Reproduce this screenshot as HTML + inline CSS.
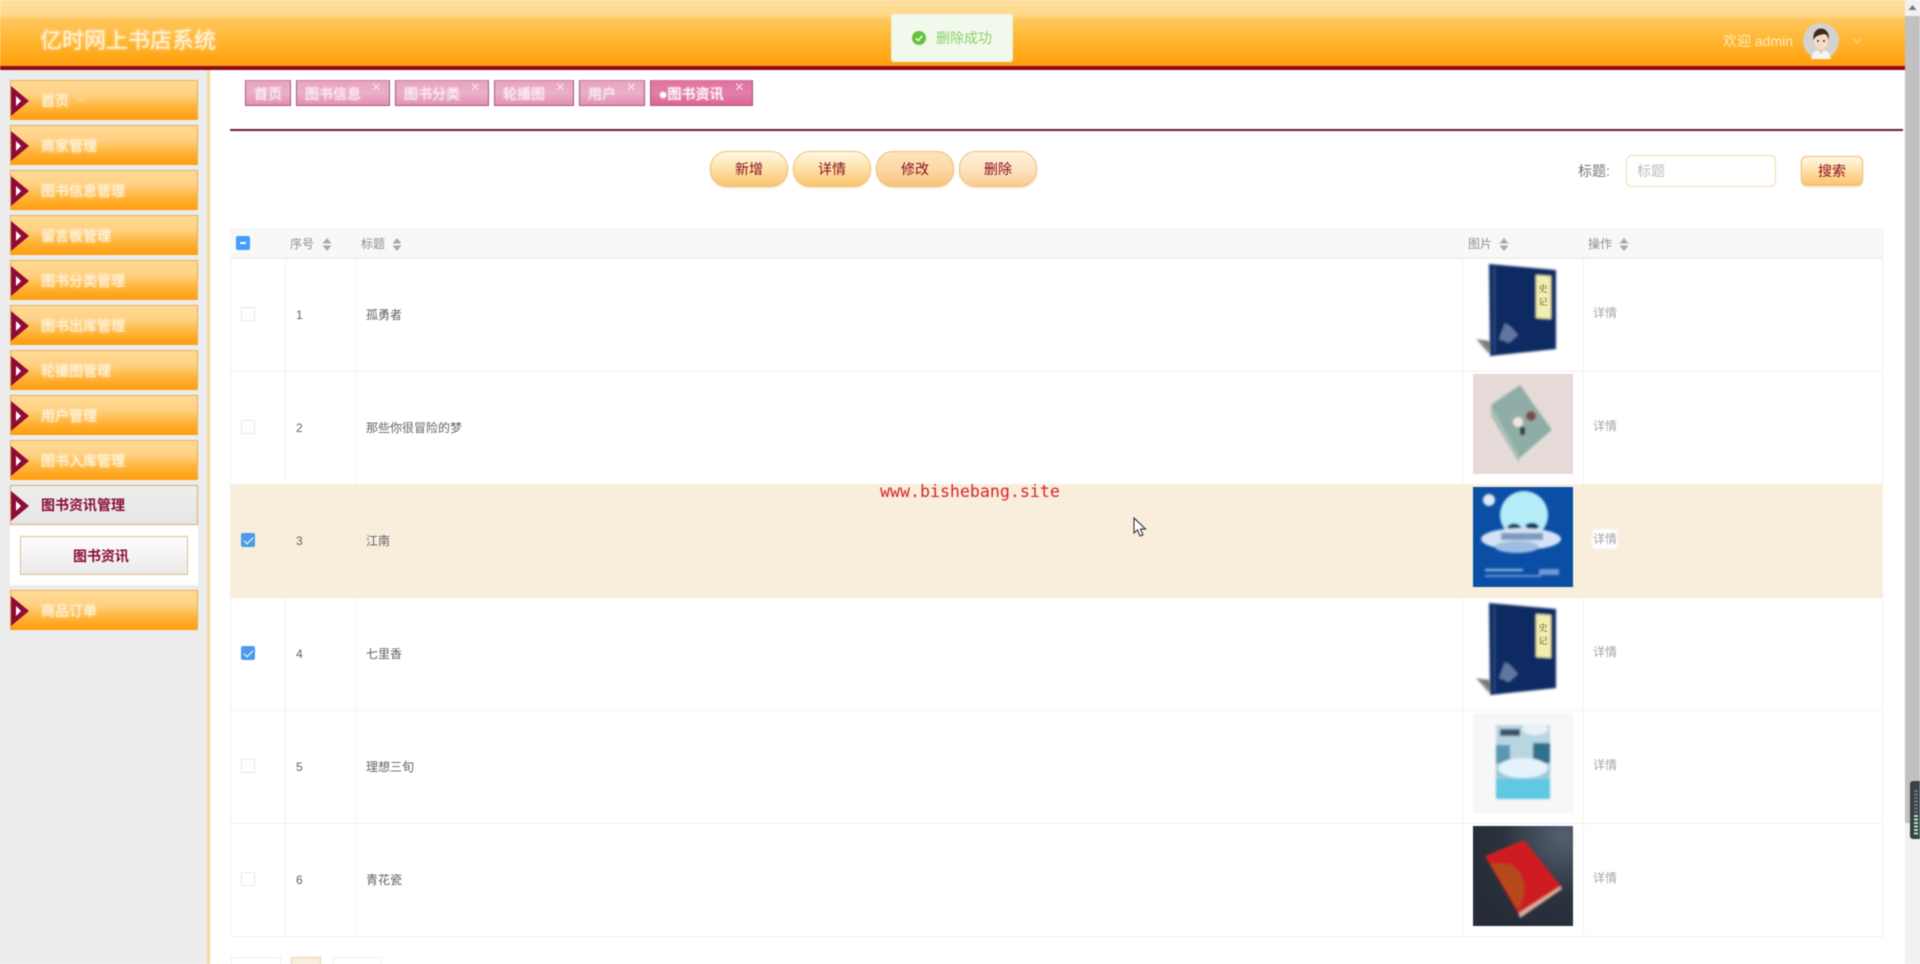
<!DOCTYPE html>
<html lang="zh"><head><meta charset="utf-8"><title>亿时网上书店系统</title>
<style>
*{box-sizing:border-box;margin:0;padding:0}
html,body{width:1920px;height:964px;overflow:hidden;background:#fff;font-family:"Liberation Sans","Noto Sans CJK SC",sans-serif}
#w{position:relative;width:1920px;height:964px;overflow:hidden;filter:blur(.4px)}
.a{position:absolute;white-space:nowrap}
#hd{left:0;top:0;width:1905px;height:70px;border-bottom:4px solid #8f0a1c;background:linear-gradient(#ffdf9e 0,#ffd98c 15px,#ffc65c 20px,#ffb52e 42px,#ff9f0c 66px)}
#side{left:0;top:70px;width:210px;height:894px;background:#ececec;border-right:3px solid #f6d8a0}
.m{position:absolute;left:10px;width:188px;height:40px;border:1px solid #e6ae58;border-bottom:0;background:linear-gradient(#ffdb95 0,#ffd183 35%,#ffb438 68%,#ff9d0e 100%);color:rgba(255,246,228,.82);font-size:14px;line-height:40px;padding-left:30px;text-shadow:0 0 3px #fff8e8}
.m:before{content:"";position:absolute;left:0;top:5px;border-left:18px solid #8f0b38;border-top:15px solid transparent;border-bottom:15px solid transparent}
.m:after{content:"";position:absolute;left:5px;top:15px;border-left:5px solid #fff;border-top:5px solid transparent;border-bottom:5px solid transparent}
.m.on{background:linear-gradient(#eeeeee,#e6e6e6);color:#8a0b3a;font-weight:bold;text-shadow:none;border:1px solid #dcae6b}
.t{position:absolute;top:80px;height:26px;border:1px solid #a8577b;border-top-color:#c9799b;background:linear-gradient(#e9a3bf,#eab0c8 50%,#e290b2);color:rgba(252,232,240,.8);font-size:14px;line-height:26px;padding-left:8px;text-shadow:0 0 2px #fff}
.t i{position:absolute;top:-6px;right:8px;font-style:normal;font-size:16px;color:#fbe6ee;text-shadow:none}
.b{position:absolute;top:151px;height:36px;border:1px solid #ecc07c;border-radius:17px;background:linear-gradient(#fff8e6,#fee3ac 45%,#fac36f);color:#8b0c1f;font-size:14px;line-height:34px;text-align:center;box-shadow:0 1px 2px #f4e0bc}
.r{position:absolute;left:230px;width:1653px;height:113px;background:#fff;box-shadow:inset 0 1px 0 #efefef}
.r.s{background:#f8eedb;box-shadow:none}
.v{position:absolute;top:0;width:1px;height:113px;background:#f2f2f2}
.r.s .v{display:none}
.c{position:absolute;left:11px;top:49px;width:14px;height:14px;border:1px solid #e4e6ea;border-radius:2px;background:#fff}
.c.k{background:#4a9be8;border-color:#4a9be8}
.c.k:after{content:"";position:absolute;left:4px;top:1px;width:4px;height:8px;border:solid #fff;border-width:0 1px 1px 0;transform:rotate(45deg)}
.n,.ti{position:absolute;top:48px;font-size:12px;line-height:18px;color:#606266}
.n{left:66px}.ti{left:136px}
.d{position:absolute;left:1363px;top:46px;font-size:12px;line-height:18px;color:#a6a6a6}
.im{position:absolute;left:1243px;top:3px;width:100px;height:100px;display:block}
.th{position:absolute;top:236px;font-size:12px;line-height:16px;color:#8f8f8f}
.so{position:absolute;top:238px;width:10px;height:13px}
.pg{position:absolute;top:957px;height:10px;border:1px solid #eee;border-bottom:0;background:#fff}
</style></head><body><div id="w">

<div class="a" id="hd"></div>
<div class="a" style="left:40px;top:26px;font-size:22px;line-height:30px;color:rgba(255,243,220,.88);text-shadow:0 0 3px #fff3dc">亿时网上书店系统</div>
<div class="a" style="left:891px;top:14px;width:122px;height:48px;background:#f0f9eb;border:1px solid #e9f5e0;border-radius:3px"></div>
<svg class="a" style="left:912px;top:31px" width="14" height="14" viewBox="0 0 14 14"><circle cx="7" cy="7" r="7" fill="#67c23a"/><path d="M3.8 7.2 6.2 9.6 10.3 4.8" fill="none" stroke="#fff" stroke-width="1.4"/></svg>
<div class="a" style="left:936px;top:29px;font-size:14px;line-height:18px;color:#8fcf6c">删除成功</div>
<div class="a" style="left:1723px;top:32px;font-size:14px;line-height:18px;color:rgba(255,240,208,.9)">欢迎 admin</div>
<svg class="a" style="left:1803px;top:23px" width="36" height="36" viewBox="0 0 36 36"><circle cx="18" cy="18" r="18" fill="#d2d2ce"/><path d="M8 36c1-7 5-9 10-9s9 2 10 9z" fill="#f4f4f4"/><path d="M15 27h6l-3 4z" fill="#e8c8b0"/><ellipse cx="18" cy="18" rx="7" ry="8.500" fill="#f6dcc8"/><path d="M10.500 17C9.500 9 14 5.500 18 5.500S27 9 25.500 17C25 13 23 11 21 11c-3 1-8.500 1-10.500 6z" fill="#3e2a22"/><circle cx="15" cy="18" r="1" fill="#333"/><circle cx="21" cy="18" r="1" fill="#333"/></svg>
<svg class="a" style="left:1853px;top:38px" width="9" height="6" viewBox="0 0 9 6"><path d="M.5.5 4.500 5 8.500.5" fill="none" stroke="#ffd998" stroke-width="1"/></svg>

<div class="a" id="side"></div>
<div class="m" style="top:80px">首页<span style="font-size:9px;margin-left:8px;opacity:.6">﹀</span></div>
<div class="m" style="top:125px">商家管理</div>
<div class="m" style="top:170px">图书信息管理</div>
<div class="m" style="top:215px">留言板管理</div>
<div class="m" style="top:260px">图书分类管理</div>
<div class="m" style="top:305px">图书出库管理</div>
<div class="m" style="top:350px">轮播图管理</div>
<div class="m" style="top:395px">用户管理</div>
<div class="m" style="top:440px">图书入库管理</div>
<div class="m on" style="top:485px;line-height:38px">图书资讯管理</div>
<div class="a" style="left:10px;top:525px;width:188px;height:60px;background:#fff"></div>
<div class="a" style="left:20px;top:536px;width:168px;height:39px;border:1px solid #dcc089;background:linear-gradient(#fdfdfd,#f4f4f4 50%,#e9e9e9);color:#8a0b3a;font-weight:bold;font-size:14px;line-height:38px;text-align:center;padding-right:6px">图书资讯</div>
<div class="m" style="top:590px">商品订单</div>

<div class="t" style="left:245px;width:46px">首页</div>
<div class="t" style="left:296px;width:94px">图书信息<i>×</i></div>
<div class="t" style="left:395px;width:94px">图书分类<i>×</i></div>
<div class="t" style="left:494px;width:80px">轮播图<i>×</i></div>
<div class="t" style="left:579px;width:66px">用户<i>×</i></div>
<div class="t" style="left:650px;width:103px;background:linear-gradient(#e2719f,#e37fa8 50%,#dc6394);color:#fff">●图书资讯<i>×</i></div>
<div class="a" style="left:230px;top:129px;width:1673px;height:2px;background:#6b1a3c"></div>

<div class="b" style="left:710px;width:78px">新增</div>
<div class="b" style="left:793px;width:78px">详情</div>
<div class="b" style="left:876px;width:78px;background:linear-gradient(#fde3bd,#fcd9a6 50%,#f8c27c)">修改</div>
<div class="b" style="left:959px;width:78px;background:linear-gradient(#fff1dc,#fde3c2 50%,#f9cc92)">删除</div>
<div class="a" style="left:1578px;top:162px;font-size:14px;line-height:18px;color:#777">标题:</div>
<div class="a" style="left:1626px;top:155px;width:150px;height:32px;border:1px solid #f0dcae;border-radius:6px;background:#fff;font-size:14px;line-height:30px;padding-left:10px;color:#bbb">标题</div>
<div class="b" style="left:1801px;top:156px;width:62px;height:30px;border-radius:6px;line-height:28px">搜索</div>

<div class="a" style="left:230px;top:229px;width:1653px;height:29px;background:#f8f8f8;border:1px solid #f1f1f1;border-width:1px 1px 1px 0"></div>
<div class="a" style="left:236px;top:236px;width:14px;height:14px;border-radius:2px;background:#409eff"><div style="margin:6px 4px 0;height:1.500px;background:#fff"></div></div>
<div class="th" style="left:290px">序号</div>
<svg class="so" style="left:322px" viewBox="0 0 10 13"><path d="M5 0 9.500 5.500H.5zM5 13 9.500 7.500H.5z" fill="#aaa"/></svg>
<div class="th" style="left:361px">标题</div>
<svg class="so" style="left:392px" viewBox="0 0 10 13"><path d="M5 0 9.500 5.500H.5zM5 13 9.500 7.500H.5z" fill="#aaa"/></svg>
<div class="th" style="left:1468px">图片</div>
<svg class="so" style="left:1499px" viewBox="0 0 10 13"><path d="M5 0 9.500 5.500H.5zM5 13 9.500 7.500H.5z" fill="#aaa"/></svg>
<div class="th" style="left:1588px">操作</div>
<svg class="so" style="left:1619px" viewBox="0 0 10 13"><path d="M5 0 9.500 5.500H.5zM5 13 9.500 7.500H.5z" fill="#aaa"/></svg>

<svg width="0" height="0" style="position:absolute"><defs>
<filter id="bl" x="-10%" y="-10%" width="120%" height="120%"><feGaussianBlur stdDeviation="1"/></filter>
<linearGradient id="sh" x1="1" y1="0" x2="0" y2="1"><stop offset="0" stop-color="#555"/><stop offset="1" stop-color="#ccc"/></linearGradient>
<radialGradient id="dk" cx=".9" cy=".1" r="1"><stop offset="0" stop-color="#556070"/><stop offset=".6" stop-color="#2b3340"/><stop offset="1" stop-color="#262c38"/></radialGradient>
</defs></svg>

<div class="r" style="top:258px"><i class="v" style="left:55px"></i><i class="v" style="left:125px"></i><i class="v" style="left:1232px"></i><i class="v" style="left:1353px"></i><i class="v" style="left:0"></i><i class="v" style="left:1652px"></i>
<span class="c"></span><span class="n">1</span><span class="ti">孤勇者</span>
<svg class="im" viewBox="0 0 100 100"><g filter="url(#bl)"><path d="M3 78 16 93 17 88 16 80z" fill="url(#sh)"/><path d="M16 3 83 9 83 88 17 95z" fill="#0f2a63"/><path d="M63 14 78 15 78 58 63 57z" fill="#f2eeb0"/><path d="M26 78 32 62 38 66 45 74 36 82z" fill="#7d93b4" opacity=".75"/><rect x="21" y="6" width="1" height="86" fill="#3c5a90"/></g><text x="70" y="31" font-size="9" text-anchor="middle" fill="#5a4a20" font-family="'Noto Serif CJK SC',serif">史</text><text x="70" y="44" font-size="9" text-anchor="middle" fill="#5a4a20" font-family="'Noto Serif CJK SC',serif">记</text></svg>
<span class="d">详情</span></div>

<div class="r" style="top:371px"><i class="v" style="left:55px"></i><i class="v" style="left:125px"></i><i class="v" style="left:1232px"></i><i class="v" style="left:1353px"></i><i class="v" style="left:0"></i><i class="v" style="left:1652px"></i>
<span class="c"></span><span class="n">2</span><span class="ti">那些你很冒险的梦</span>
<svg class="im" viewBox="0 0 100 100"><rect width="100" height="100" fill="#e6dad8"/><g filter="url(#bl)"><path d="M18 31 47 11 79 56 47 84z" fill="#8fada6"/><path d="M18 31 18 42 46 89 47 84z" fill="#a9c0b8"/><path d="M47 84 46 89 78 64 79 56z" fill="#e2dedb"/><circle cx="45" cy="48" r="5" fill="#f0e8e0"/><circle cx="58" cy="42" r="5" fill="#7a4a4a"/><rect x="47" y="53" width="5" height="8" fill="#2a3a38"/></g></svg>
<span class="d">详情</span></div>

<div class="r s" style="top:484px">
<span class="c k"></span><span class="n">3</span><span class="ti">江南</span>
<svg class="im" viewBox="0 0 100 100"><rect width="100" height="100" fill="#0a4ea6"/><g filter="url(#bl)"><circle cx="51" cy="28" r="24" fill="#b4ecf8"/><path d="M34 40c5-6 14-4 16 4h-4l-3 2-4-2zM52 38c6-4 13-2 14 2l-6 4-3 2z" fill="#0d3364"/><rect x="30" y="45" width="40" height="2" fill="#0d3364"/><ellipse cx="48" cy="52" rx="40" ry="11" fill="#d4e2f4"/><ellipse cx="44" cy="60" rx="22" ry="6" fill="#9fbde4"/><rect x="28" y="46" width="42" height="7" fill="#355f96" opacity=".55"/><circle cx="16" cy="13" r="6" fill="#dfeaf5"/><rect x="12" y="82" width="38" height="2" fill="#a8c4e6"/><rect x="12" y="88" width="56" height="2" fill="#6e99d4"/><rect x="66" y="82" width="20" height="6" fill="#6e99d4"/></g></svg>
<span class="d" style="background:#fff;box-shadow:0 0 4px #fff">详情</span></div>

<div class="r" style="top:597px;box-shadow:inset 0 1px 0 #f5e6c8"><i class="v" style="left:55px"></i><i class="v" style="left:125px"></i><i class="v" style="left:1232px"></i><i class="v" style="left:1353px"></i><i class="v" style="left:0"></i><i class="v" style="left:1652px"></i>
<span class="c k"></span><span class="n">4</span><span class="ti">七里香</span>
<svg class="im" viewBox="0 0 100 100"><g filter="url(#bl)"><path d="M3 78 16 93 17 88 16 80z" fill="url(#sh)"/><path d="M16 3 83 9 83 88 17 95z" fill="#0f2a63"/><path d="M63 14 78 15 78 58 63 57z" fill="#f2eeb0"/><path d="M26 78 32 62 38 66 45 74 36 82z" fill="#7d93b4" opacity=".75"/><rect x="21" y="6" width="1" height="86" fill="#3c5a90"/></g><text x="70" y="31" font-size="9" text-anchor="middle" fill="#5a4a20" font-family="'Noto Serif CJK SC',serif">史</text><text x="70" y="44" font-size="9" text-anchor="middle" fill="#5a4a20" font-family="'Noto Serif CJK SC',serif">记</text></svg>
<span class="d">详情</span></div>

<div class="r" style="top:710px"><i class="v" style="left:55px"></i><i class="v" style="left:125px"></i><i class="v" style="left:1232px"></i><i class="v" style="left:1353px"></i><i class="v" style="left:0"></i><i class="v" style="left:1652px"></i>
<span class="c"></span><span class="n">5</span><span class="ti">理想三旬</span>
<svg class="im" viewBox="0 0 100 100"><rect width="100" height="100" fill="#f7f7f8"/><g filter="url(#bl)"><rect x="23" y="12" width="54" height="74" fill="#9cc8d8"/><rect x="23" y="12" width="54" height="38" fill="#b8d6e2"/><rect x="60" y="30" width="17" height="20" fill="#2f6f8e"/><rect x="23" y="32" width="14" height="18" fill="#5a98b0"/><ellipse cx="50" cy="55" rx="25" ry="10" fill="#e4f2fb"/><rect x="23" y="66" width="54" height="20" fill="#5fc8e2"/><rect x="27" y="16" width="20" height="7" fill="#3a5568"/><ellipse cx="62" cy="16" rx="13" ry="6" fill="#e8f2f6"/></g></svg>
<span class="d">详情</span></div>

<div class="r" style="top:823px"><i class="v" style="left:55px"></i><i class="v" style="left:125px"></i><i class="v" style="left:1232px"></i><i class="v" style="left:1353px"></i><i class="v" style="left:0"></i><i class="v" style="left:1652px"></i>
<span class="c"></span><span class="n">6</span><span class="ti">青花瓷</span>
<svg class="im" viewBox="0 0 100 100"><rect width="100" height="100" fill="url(#dk)"/><g filter="url(#bl)"><path d="M12 30 51 14 88 60 46 89z" fill="#cf1f20"/><path d="M17 37 35 38c18 6 20 30 10 46z" fill="#b6481f"/><path d="M46 89 46 87 88 60 89 63 47 92z" fill="#dcb0a0"/></g></svg>
<span class="d">详情</span></div>
<div class="a" style="left:230px;top:936px;width:1653px;height:1px;background:#efefef"></div>

<div class="pg" style="left:231px;width:50px"></div>
<div class="pg" style="left:291px;width:30px;background:#f9efdc;border-color:#e8d2a4"></div>
<div class="pg" style="left:333px;width:49px"></div>

<div class="a" style="left:880px;top:481px;font-family:'DejaVu Sans Mono','Liberation Mono',monospace;font-size:16.6px;line-height:22px;color:#d9252b">www.bishebang.site</div>
<svg class="a" style="left:1133px;top:517px" width="14" height="21" viewBox="0 0 14 21"><path d="M1 1V16L4.500 12.800 7 19 10 17.800 7.500 12H12.500z" fill="#fff" stroke="#222" stroke-width="1"/></svg>

<div class="a" style="left:1905px;top:0;width:15px;height:964px;background:#f1f1f1"></div>
<div class="a" style="left:1905px;top:16px;width:15px;height:807px;background:#c1c1c1"></div>
<svg class="a" style="left:1908px;top:4px" width="9" height="7" viewBox="0 0 9 7"><path d="M4.500 1 8.500 6H.5z" fill="#777"/></svg>
<div class="a" style="left:1910px;top:781px;width:10px;height:58px;background:#3a4048;border-radius:3px 0 0 3px"></div>
<div class="a" style="left:1914px;top:790px;width:4px;height:24px;background:repeating-linear-gradient(#6a7680 0 2px,#3a4048 2px 3.500px)"></div>
<div class="a" style="left:1914px;top:815px;width:4px;height:20px;background:repeating-linear-gradient(#a6eebc 0 2px,#3a4048 2px 3.500px)"></div>

</div></body></html>
